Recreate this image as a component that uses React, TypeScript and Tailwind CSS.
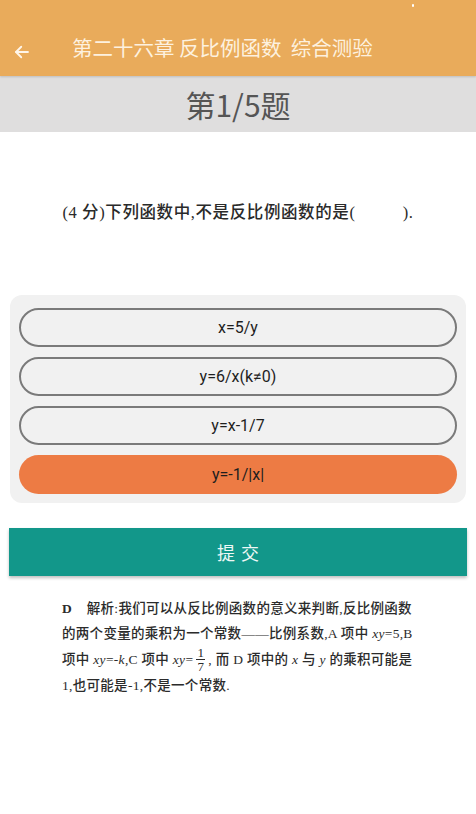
import React from 'react'

const options = ['x=5/y', 'y=6/x(k≠0)', 'y=x-1/7', 'y=-1/|x|']
const selected = 3

export default function App() {
    return (
        <div className="min-h-screen w-[476px] bg-white flex flex-col font-['Roboto','Noto_Sans_CJK_SC',sans-serif]">
            {/* 顶部栏 */}
            <div className="h-[76px] bg-[#e9ab5b] relative flex items-end pb-[14px] shadow-[0_1px_2px_rgba(0,0,0,0.15)]">
                <div className="absolute right-[62px] top-[4px] w-[2px] h-[3px] bg-white rounded-full" />
                <div className="w-[44px] flex justify-center pb-[1px]">
                    <svg width="18" height="18" viewBox="0 0 24 24" fill="none" stroke="#fff6ea" strokeWidth="2.4" strokeLinecap="round" strokeLinejoin="round">
                        <path d="M20 12H4" />
                        <path d="M11 5l-7 7 7 7" />
                    </svg>
                </div>
                <div className="ml-[28px] text-[#fdf1df] text-[20.5px] leading-[30px] font-['Noto_Sans_CJK_SC',sans-serif]">第二十六章 反比例函数&nbsp;&nbsp;综合测验</div>
            </div>

            {/* 题号 */}
            <div className="h-[56px] bg-[#dfdede] flex items-center justify-center">
                <div className="text-[#555555] text-[30px] leading-[40px] font-['Noto_Sans_CJK_SC',sans-serif]">第1/5题</div>
            </div>

            {/* 题目 */}
            <div className="h-[163px] pt-[70px] flex justify-center">
                <div className="text-[#2a2a2a] text-[16.5px] leading-[22px] font-medium tracking-[0.6px] font-['Liberation_Serif','Noto_Sans_CJK_SC',serif]">
                    (4 分)下列函数中,不是反比例函数的是(&nbsp;&nbsp;&nbsp;&nbsp;&nbsp;&nbsp;&nbsp;&nbsp;&nbsp;&nbsp;).
                </div>
            </div>

            {/* 选项 */}
            <div className="mx-[10px] bg-[#f1f1f1] rounded-[12px] pt-[13px] pb-[9px] px-[9px] flex flex-col gap-[10px]">
                {options.map((o, i) => (
                    <div
                        key={o}
                        className={
                            i === selected
                                ? 'h-[39px] rounded-full bg-[#ed7b44] flex items-center justify-center text-[#1e1e1e] text-[16px]'
                                : 'h-[39px] rounded-full border-2 border-[#7a7a7a] bg-[#f1f1f1] flex items-center justify-center text-[#1e1e1e] text-[16px]'
                        }
                    >
                        {o}
                    </div>
                ))}
            </div>

            {/* 提交 */}
            <div className="mt-[25px] mx-[9px] h-[48px] bg-[#12978a] flex items-center justify-center shadow-[0_2px_3px_rgba(0,0,0,0.25)]">
                <div className="text-[#eef8f6] text-[18px] tracking-[6px] pl-[6px] font-['Noto_Sans_CJK_SC',sans-serif]">提交</div>
            </div>

            {/* 解析 */}
            <div className="mt-[20px] pl-[62px] pr-[58px] text-[#2b2b2b] text-[13.5px] leading-[25px] font-medium tracking-[0.3px] font-['Liberation_Serif','Noto_Sans_CJK_SC',serif] whitespace-nowrap">
                <div><span className="font-bold">D</span>&nbsp;&nbsp;&nbsp;&nbsp;解析:我们可以从反比例函数的意义来判断,反比例函数</div>
                <div>的两个变量的乘积为一个常数——比例系数,A 项中 <i>xy</i>=5,B</div>
                <div className="flex items-center h-[27px]">
                    <span>项中 <i>xy</i>=-<i>k</i>,C 项中 <i>xy</i>=</span>
                    <span className="inline-flex flex-col items-center leading-[13px] text-[13px] mx-[3px]">
                        <span>1</span>
                        <span className="w-[9px] h-px bg-[#2b2b2b]" />
                        <span>7</span>
                    </span>
                    <span>,&nbsp;而 D 项中的 <i>x</i> 与 <i>y</i> 的乘积可能是</span>
                </div>
                <div>1,也可能是-1,不是一个常数.</div>
            </div>
        </div>
    )
}
